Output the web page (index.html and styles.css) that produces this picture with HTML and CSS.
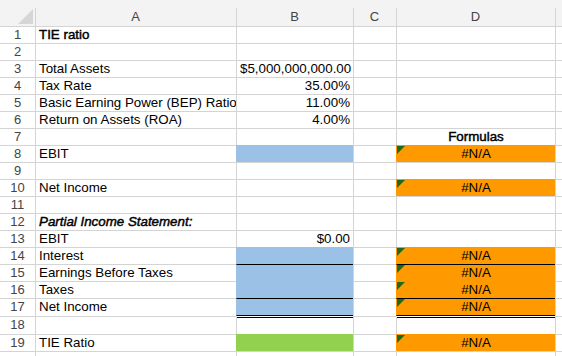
FILE: index.html
```html
<!DOCTYPE html>
<html>
<head>
<meta charset="utf-8">
<link rel="stylesheet" href="styles.css">
</head>
<body>
<div class="sheet">
  <div class="head">
    <div class="corner"><svg width="35" height="26" viewBox="0 0 35 26"><polygon points="18,24 33,24 33,9" fill="#d6d6d6"/></svg></div>
    <div class="hc">A</div>
    <div class="hc">B</div>
    <div class="hc">C</div>
    <div class="hc">D</div>
    <div class="hc"></div>
  </div>

  <div class="row"><div class="rh">1</div><div class="c bold">TIE ratio</div><div class="c"></div><div class="c"></div><div class="c"></div><div class="c"></div></div>
  <div class="row"><div class="rh">2</div><div class="c"></div><div class="c"></div><div class="c"></div><div class="c"></div><div class="c"></div></div>
  <div class="row"><div class="rh">3</div><div class="c">Total Assets</div><div class="c num">$5,000,000,000.00</div><div class="c"></div><div class="c"></div><div class="c"></div></div>
  <div class="row"><div class="rh">4</div><div class="c">Tax Rate</div><div class="c num">35.00%</div><div class="c"></div><div class="c"></div><div class="c"></div></div>
  <div class="row"><div class="rh">5</div><div class="c">Basic Earning Power (BEP) Ratio</div><div class="c num">11.00%</div><div class="c"></div><div class="c"></div><div class="c"></div></div>
  <div class="row"><div class="rh">6</div><div class="c">Return on Assets (ROA)</div><div class="c num">4.00%</div><div class="c"></div><div class="c"></div><div class="c"></div></div>
  <div class="row"><div class="rh">7</div><div class="c"></div><div class="c"></div><div class="c"></div><div class="c bold ctr">Formulas</div><div class="c"></div></div>
  <div class="row"><div class="rh">8</div><div class="c">EBIT</div><div class="c blue"></div><div class="c"></div><div class="c orange ctr"><span class="tri"></span>#N/A</div><div class="c"></div></div>
  <div class="row"><div class="rh">9</div><div class="c"></div><div class="c"></div><div class="c"></div><div class="c"></div><div class="c"></div></div>
  <div class="row"><div class="rh">10</div><div class="c">Net Income</div><div class="c"></div><div class="c"></div><div class="c orange ctr"><span class="tri"></span>#N/A</div><div class="c"></div></div>
  <div class="row"><div class="rh">11</div><div class="c"></div><div class="c"></div><div class="c"></div><div class="c"></div><div class="c"></div></div>
  <div class="row"><div class="rh">12</div><div class="c bold italic">Partial Income Statement:</div><div class="c"></div><div class="c"></div><div class="c"></div><div class="c"></div></div>
  <div class="row"><div class="rh">13</div><div class="c">EBIT</div><div class="c num">$0.00</div><div class="c"></div><div class="c"></div><div class="c"></div></div>
  <div class="row"><div class="rh">14</div><div class="c">Interest</div><div class="c blue"></div><div class="c"></div><div class="c orange ctr"><span class="tri"></span>#N/A</div><div class="c"></div></div>
  <div class="row"><div class="rh">15</div><div class="c">Earnings Before Taxes</div><div class="c blue line-top"></div><div class="c"></div><div class="c orange ctr line-top"><span class="tri"></span>#N/A</div><div class="c"></div></div>
  <div class="row"><div class="rh">16</div><div class="c">Taxes</div><div class="c blue"></div><div class="c"></div><div class="c orange ctr"><span class="tri"></span>#N/A</div><div class="c"></div></div>
  <div class="row tall"><div class="rh">17</div><div class="c">Net Income</div><div class="c blue line-top line-bottom"></div><div class="c"></div><div class="c orange ctr line-top line-bottom"><span class="tri"></span>#N/A</div><div class="c"></div></div>
  <div class="row tall"><div class="rh">18</div><div class="c"></div><div class="c dbl"></div><div class="c"></div><div class="c dbl"></div><div class="c"></div></div>
  <div class="row"><div class="rh">19</div><div class="c">TIE Ratio</div><div class="c green"></div><div class="c"></div><div class="c orange ctr"><span class="tri"></span>#N/A</div><div class="c"></div></div>
  <div class="row"><div class="rh"></div><div class="c"></div><div class="c"></div><div class="c"></div><div class="c"></div><div class="c"></div></div>
</div>
</body>
</html>
```

FILE: styles.css
```css
html, body {
  margin: 0;
  padding: 0;
  background: #ffffff;
  overflow: hidden;
}

body {
  font-family: "Liberation Sans", Arial, sans-serif;
  font-size: 13.33px;
  color: #000;
}

.sheet {
  width: 562px;
}

.head {
  display: grid;
  grid-template-columns: 35px 201px 117px 43px 159px 7px;
  height: 26px;
  background: #f3f3f3;
}

.corner svg {
  display: block;
}

.hc {
  box-sizing: border-box;
  padding-top: 8px;
  line-height: 18px;
  text-align: center;
  color: #444;
  font-size: 13px;
  background: linear-gradient(#d4d4d4, #d4d4d4) 0 8px / 1px 18px no-repeat;
}

.row {
  display: grid;
  grid-template-columns: 35px 201px 117px 43px 159px 7px;
  height: 17px;
}

.row.tall {
  height: 18px;
}

.row > div {
  box-sizing: border-box;
  border-top: 1px solid #d4d4d4;
  line-height: 16px;
  white-space: nowrap;
  position: relative;
}

.row > div + div {
  border-left: 1px solid #d4d4d4;
}

.rh {
  text-align: center;
  color: #444;
  font-size: 13px;
}

.c {
  padding: 0 3px;
}

.num {
  text-align: right;
}

.ctr {
  text-align: center;
}

.bold {
  font-weight: normal;
  -webkit-text-stroke: 0.45px #000;
}

.italic {
  font-style: italic;
}

.row > .blue {
  background: #9bc2e6;
  border-top-color: #9bc2e6;
  border-left-color: #9bc2e6;
}

.row > .green {
  background: #92d050;
  border-top-color: #92d050;
  border-left-color: #92d050;
}

.row > .orange {
  background: #ff9900;
  border-top-color: #ff9900;
  border-left-color: #ff9900;
}

.row > .line-top {
  border-top-color: #000;
}

.row > .line-bottom {
  border-bottom: 1px solid #000;
}

.row > .dbl {
  border-top-color: #fff;
  box-shadow: inset 0 1px 0 #000;
}

.tri {
  position: absolute;
  left: 0;
  top: 0;
  width: 0;
  height: 0;
  border-top: 8px solid #1b6b1b;
  border-right: 8px solid transparent;
}
```
